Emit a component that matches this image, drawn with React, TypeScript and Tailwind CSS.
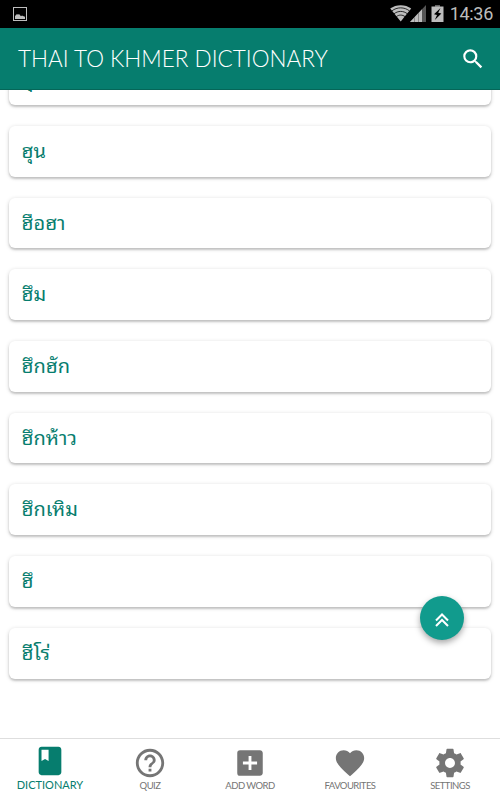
import { MdAddBox, MdBook, MdFavorite, MdHelpOutline, MdSearch } from 'react-icons/md';
import type { ReactNode } from 'react';

const words = ['ฮุบ', 'ฮุน', 'ฮือฮา', 'ฮึม', 'ฮึกฮัก', 'ฮึกห้าว', 'ฮึกเหิม', 'ฮึ', 'ฮีโร่'];

function GearIcon() {
  return (
    <svg viewBox="0 0 24 24" className="size-[34px]" fill="currentColor">
      <path d="M19.43 12.98c.04-.32.07-.64.07-.98s-.03-.66-.07-.98l2.11-1.65c.19-.15.24-.42.12-.64l-2-3.46c-.12-.22-.39-.3-.61-.22l-2.49 1c-.52-.4-1.08-.73-1.69-.98l-.38-2.65C14.46 2.18 14.25 2 14 2h-4c-.25 0-.46.18-.49.42l-.38 2.65c-.61.25-1.17.59-1.69.98l-2.49-1c-.23-.09-.49 0-.61.22l-2 3.46c-.13.22-.07.49.12.64l2.11 1.65c-.04.32-.07.65-.07.98s.03.66.07.98l-2.11 1.65c-.19.15-.24.42-.12.64l2 3.46c.12.22.39.3.61.22l2.49-1c.52.4 1.08.73 1.69.98l.38 2.65c.03.24.24.42.49.42h4c.25 0 .46-.18.49-.42l.38-2.65c.61-.25 1.17-.59 1.69-.98l2.49 1c.23.09.49 0 .61-.22l2-3.46c.12-.22.07-.49-.12-.64l-2.11-1.65zM12 15.5c-1.93 0-3.5-1.57-3.5-3.5s1.57-3.5 3.5-3.5 3.5 1.57 3.5 3.5-1.57 3.5-3.5 3.5z" />
    </svg>
  );
}

function StatusBar() {
  return (
    <div className="flex h-7 shrink-0 items-center justify-between bg-black pl-[13px] pr-[7px] text-[#bdbdbd]">
      <svg viewBox="0 0 14 14" className="size-3.5" fill="none">
        <rect x=".5" y=".5" width="13" height="13" stroke="currentColor" />
        <path d="M2 12V9l2-2 1 .7L6 7l2 2.2 1-.7 1 .5 2 .8V12z" fill="currentColor" />
      </svg>
      <div className="flex items-center">
        <svg viewBox="0 0 54 20" className="mr-[6px] h-5 w-[54px]" fill="none">
          {/* wifi */}
          <path d="M10.7 17.5.2 4.6C6 .1 15.5.1 21.2 4.6z" fill="currentColor" />
          <path d="M1.8 7c5.2-4.2 12.6-4.2 17.8 0M4 9.8c4-3.2 9.4-3.2 13.4 0M6.4 12.6c2.6-2 6-2 8.6 0" stroke="#000" strokeWidth=".8" />
          {/* signal */}
          <path d="M36 1v17H20z" fill="#555" />
          <path d="M32 5.2V18H20z" fill="currentColor" />
          <path d="M24.5 13v5M28.5 9v9" stroke="#888" strokeWidth="1" />
          {/* battery */}
          <path d="M45 1h5v2h-5z" fill="#666" />
          <path d="M41.5 2.5h12V18h-12z" fill="currentColor" />
          <path d="m50.5 4-6.5 6.2 3 .8-2.2 5 6.6-6.5-3.2-.8z" fill="#000" />
        </svg>
        <span className="font-['Roboto',sans-serif] text-[18px] leading-7 tracking-[-0.3px]">14:36</span>
      </div>
    </div>
  );
}

function WordCard({ word }: { word: string }) {
  return (
    <div className="flex h-[50.7px] shrink-0 items-center rounded-md bg-white pb-[5px] pl-[12.5px] text-[20px] text-[#067d6e] shadow-[0_1px_4px_rgba(0,0,0,0.18),0_2px_2px_rgba(0,0,0,0.14)]">
      {word}
    </div>
  );
}

function NavItem({ icon, label, active = false }: { icon: ReactNode; label: string; active?: boolean }) {
  return (
    <button
      className={
        active
          ? 'flex flex-1 flex-col items-center pt-[5px] text-[11px] text-[#067d6e]'
          : 'flex flex-1 flex-col items-center pt-[7px] text-[9.5px] tracking-[-0.55px] text-[#757575]'
      }
    >
      {icon}
      <span className={active ? 'mt-px leading-3 whitespace-nowrap' : 'leading-3 whitespace-nowrap'}>{label}</span>
    </button>
  );
}

export default function App() {
  return (
    <div className="relative flex h-[800px] w-[500px] flex-col overflow-hidden bg-white font-['Lato',sans-serif]">
      <StatusBar />
      <header className="flex h-[62px] shrink-0 items-center justify-between border-b border-[#056658] bg-[#067d6e] pr-[14px] pl-[18px] text-white">
        <h1 className="text-[22.5px] font-light whitespace-nowrap">THAI TO KHMER DICTIONARY</h1>
        <MdSearch className="size-[26px]" />
      </header>

      <main className="flex min-h-0 flex-1 flex-col overflow-hidden px-[9px]">
        {/* First card is partly scrolled under the header */}
        <div className="-mt-[35.7px] flex flex-col gap-[21px] font-['Noto_Sans_Thai_Looped','Noto_Looped_Thai','Loma','Garuda','Waree','Droid_Sans_Thai','Noto_Serif_Thai',sans-serif]">
          {words.map((word) => (
            <WordCard key={word} word={word} />
          ))}
        </div>
      </main>

      <nav className="flex h-[62px] shrink-0 border-t border-[#dedede] bg-white">
        <NavItem active icon={<MdBook className="size-[34px]" />} label="DICTIONARY" />
        <NavItem icon={<MdHelpOutline className="size-[34px]" />} label="QUIZ" />
        <NavItem icon={<MdAddBox className="size-[34px]" />} label="ADD WORD" />
        <NavItem icon={<MdFavorite className="size-[34px]" />} label="FAVOURITES" />
        <NavItem icon={<GearIcon />} label="SETTINGS" />
      </nav>

      {/* Scroll to top */}
      <button className="absolute top-[596px] left-[420px] flex size-11 items-center justify-center rounded-full bg-[#119b8d] text-white shadow-[0_3px_6px_rgba(0,0,0,0.35)]">
        <svg viewBox="0 0 14 14" className="mt-1 size-3.5" fill="none" stroke="currentColor" strokeWidth="2">
          <path d="m1 7.5 6-6 6 6M1 13l6-6 6 6" />
        </svg>
      </button>
    </div>
  );
}
